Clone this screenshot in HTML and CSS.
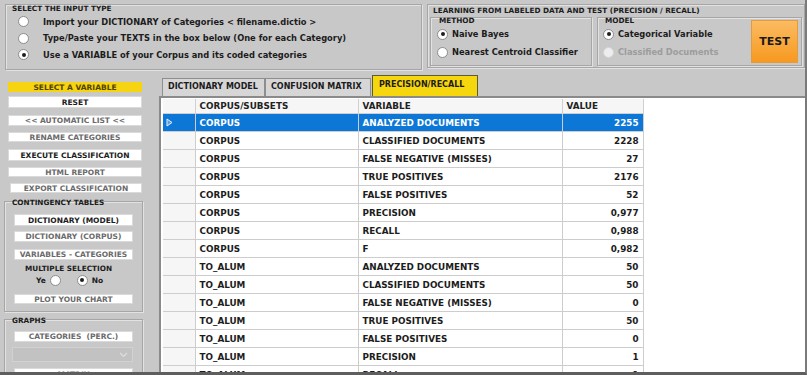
FILE: index.html
```html
<!DOCTYPE html>
<html lang="en">
<head>
<meta charset="UTF-8">
<meta name="viewport" content="width=device-width, initial-scale=1.0">
<title>Classification - Precision / Recall</title>
<link rel="stylesheet" href="styles.css">
</head>
<body>
<div class="app">

  <div class="top">
    <div class="group input-type">
      <div class="group-title">SELECT THE INPUT TYPE</div>
      <div class="radio"><span class="dot"></span>Import your DICTIONARY of Categories &lt; filename.dictio &gt;</div>
      <div class="radio"><span class="dot"></span>Type/Paste your TEXTS in the box below (One for each Category)</div>
      <div class="radio"><span class="dot on"></span>Use a VARIABLE of your Corpus and its coded categories</div>
    </div>

    <div class="group learning">
      <div class="group-title">LEARNING FROM LABELED DATA AND TEST (PRECISION / RECALL)</div>
      <div class="learning-row">
        <div class="group sub method">
          <div class="sub-title">METHOD</div>
          <div class="radio small"><span class="dot on"></span>Naive Bayes</div>
          <div class="radio small"><span class="dot"></span>Nearest Centroid Classifier</div>
        </div>
        <div class="group sub model">
          <div class="model-left">
            <div class="sub-title">MODEL</div>
            <div class="radio small"><span class="dot on"></span>Categorical Variable</div>
            <div class="radio small off"><span class="dot"></span>Classified Documents</div>
          </div>
          <button class="test">TEST</button>
        </div>
      </div>
    </div>
  </div>

  <div class="main">
    <div class="side">
      <div class="btn yellow h10">SELECT A VARIABLE</div>
      <div class="btn h12 mt4">RESET</div>
      <div class="btn grey h11 mt7">&lt;&lt; AUTOMATIC LIST &lt;&lt;</div>
      <div class="btn grey h10 mt6">RENAME CATEGORIES</div>
      <div class="btn h12 mt7">EXECUTE CLASSIFICATION</div>
      <div class="btn grey h10 mt6">HTML REPORT</div>
      <div class="btn grey h10 mt6 export">EXPORT CLASSIFICATION</div>

      <div class="group side-box contingency">
        <div class="sub-title">CONTINGENCY TABLES</div>
        <div class="btn inner h12 mt7">DICTIONARY (MODEL)</div>
        <div class="btn inner grey h11 mt5">DICTIONARY (CORPUS)</div>
        <div class="btn inner grey h11 mt7">VARIABLES - CATEGORIES</div>
        <div class="multi">MULTIPLE SELECTION</div>
        <div class="yes-no">
          <span>Ye</span><span class="dot"></span>
          <span class="dot on"></span><span>No</span>
        </div>
        <div class="btn inner grey h10 mt8">PLOT YOUR CHART</div>
      </div>

      <div class="group side-box graphs">
        <div class="sub-title">GRAPHS</div>
        <div class="btn inner grey h11 mt6">CATEGORIES&nbsp; (PERC.)</div>
        <div class="select">
          <svg width="9" height="6" viewBox="0 0 9 6"><polyline points="1,1 4.5,4.5 8,1" fill="none" stroke="#dedede" stroke-width="1.2"/></svg>
        </div>
        <div class="btn inner grey h12 mt6">MATRIX</div>
      </div>
    </div>

    <div class="tabs-wrap">
      <div class="tabs">
        <div class="tab">DICTIONARY MODEL</div>
        <div class="tab">CONFUSION MATRIX</div>
        <div class="tab active">PRECISION/RECALL</div>
      </div>
      <div class="panel">
        <table class="grid">
          <colgroup>
            <col class="c-head"><col class="c-corpus"><col class="c-var"><col class="c-val">
          </colgroup>
          <thead>
            <tr><th></th><th>CORPUS/SUBSETS</th><th>VARIABLE</th><th>VALUE</th></tr>
          </thead>
          <tbody>
            <tr class="sel">
              <td class="rh"><svg width="7" height="9" viewBox="0 0 7 9"><polygon points="1,1 6,4.5 1,8" fill="#5b9be0" stroke="#e8f1fb" stroke-width="1"/></svg></td>
              <td>CORPUS</td><td>ANALYZED DOCUMENTS</td><td class="num">2255</td>
            </tr>
            <tr><td class="rh"></td><td>CORPUS</td><td>CLASSIFIED DOCUMENTS</td><td class="num">2228</td></tr>
            <tr><td class="rh"></td><td>CORPUS</td><td>FALSE NEGATIVE (MISSES)</td><td class="num">27</td></tr>
            <tr><td class="rh"></td><td>CORPUS</td><td>TRUE POSITIVES</td><td class="num">2176</td></tr>
            <tr><td class="rh"></td><td>CORPUS</td><td>FALSE POSITIVES</td><td class="num">52</td></tr>
            <tr><td class="rh"></td><td>CORPUS</td><td>PRECISION</td><td class="num">0,977</td></tr>
            <tr><td class="rh"></td><td>CORPUS</td><td>RECALL</td><td class="num">0,988</td></tr>
            <tr><td class="rh"></td><td>CORPUS</td><td>F</td><td class="num">0,982</td></tr>
            <tr><td class="rh"></td><td>TO_ALUM</td><td>ANALYZED DOCUMENTS</td><td class="num">50</td></tr>
            <tr><td class="rh"></td><td>TO_ALUM</td><td>CLASSIFIED DOCUMENTS</td><td class="num">50</td></tr>
            <tr><td class="rh"></td><td>TO_ALUM</td><td>FALSE NEGATIVE (MISSES)</td><td class="num">0</td></tr>
            <tr><td class="rh"></td><td>TO_ALUM</td><td>TRUE POSITIVES</td><td class="num">50</td></tr>
            <tr><td class="rh"></td><td>TO_ALUM</td><td>FALSE POSITIVES</td><td class="num">0</td></tr>
            <tr><td class="rh"></td><td>TO_ALUM</td><td>PRECISION</td><td class="num">1</td></tr>
            <tr><td class="rh"></td><td>TO_ALUM</td><td>RECALL</td><td class="num">1</td></tr>
          </tbody>
        </table>
      </div>
    </div>
  </div>

</div>
</body>
</html>
```

FILE: styles.css
```css
body {
  margin: 0;
  background: #c8c8c8;
}

.app {
  width: 807px;
  height: 375px;
  box-sizing: border-box;
  border-right: 2px solid #7a7a7a;
  border-bottom: 3px solid #5e5e5e;
  display: flex;
  flex-direction: column;
  overflow: hidden;
  background: #c8c8c8;
  font-family: "DejaVu Sans", Verdana, sans-serif;
  font-weight: bold;
  color: #1c1c1c;
}

/* group boxes */
.group {
  border: 1px solid #a6a6a6;
  box-shadow: inset 1px 1px 0 #e2e2e2, 1px 1px 0 #e2e2e2;
  box-sizing: border-box;
}
.group-title {
  font-size: 7.3px;
  line-height: 8px;
  padding-left: 6px;
}
.sub-title {
  font-size: 7.3px;
  line-height: 8px;
  padding-left: 2px;
  margin-top: -1px;
}

.top {
  display: flex;
  gap: 5px;
  padding: 4px 0 0 5px;
  height: 71px;
  box-sizing: border-box;
  flex: none;
}
.input-type {
  width: 417px;
  height: 66px;
}
.learning {
  width: 378px;
  height: 64px;
  padding: 2px 2px 0 2px;
}
.learning .group-title {
  padding-left: 3px;
}
.learning-row {
  display: flex;
  gap: 5px;
  margin-top: 2px;
}
.method {
  width: 162px;
  height: 49px;
  padding-left: 6px;
}
.model {
  flex: 1;
  height: 49px;
  padding-left: 5px;
  display: flex;
  justify-content: space-between;
}

/* radios */
.radio {
  display: flex;
  align-items: center;
  height: 16.5px;
  font-size: 8.3px;
  padding-left: 12px;
  gap: 14px;
}
.input-type .radio:nth-child(2) {
  margin-top: 0.5px;
}
.radio.small {
  height: 18px;
  padding-left: 0;
  gap: 4px;
}
.method .radio.small:first-of-type,
.model .radio.small:first-of-type {
  margin-top: 1px;
}
.radio.off {
  color: #9c9c9c;
}
.dot {
  width: 11px;
  height: 11px;
  border-radius: 50%;
  background: #fff;
  border: 1px solid #8c8c8c;
  box-sizing: border-box;
  flex: none;
  position: relative;
  display: inline-block;
}
.dot.on::after {
  content: "";
  position: absolute;
  inset: 2.5px;
  border-radius: 50%;
  background: #1e1e1e;
}
.off .dot {
  background: #ededed;
  border-color: #d4d4d4;
}

.test {
  width: 47px;
  height: 43px;
  margin: 2px 3px 0 0;
  border: 1px solid #e59a3c;
  background: linear-gradient(#fbbb62, #f7991f);
  font-family: inherit;
  font-weight: bold;
  font-size: 11px;
  color: #1a1a1a;
  padding: 0;
}

/* left column */
.main {
  display: flex;
  flex: 1;
  min-height: 0;
}
.side {
  width: 160px;
  flex: none;
  padding-top: 11px;
}
.btn {
  margin-left: 8px;
  width: 134px;
  background: #fff;
  border: 1px solid #dadada;
  box-sizing: border-box;
  font-size: 7.5px;
  text-align: center;
  color: #1c1c1c;
  display: flex;
  align-items: center;
  justify-content: center;
}
.btn.grey { color: #6a6a6a; }
.btn.yellow {
  background: #f6d411;
  border-color: #f6d411;
  color: #4e4300;
}
.btn.export { margin-left: 10px; width: 132px; }
.btn.inner { margin-left: 9px; width: 119px; }
.h10 { height: 10px; }
.h11 { height: 11px; }
.h12 { height: 12px; }
.mt4 { margin-top: 4px; }
.mt5 { margin-top: 5px; }
.mt6 { margin-top: 6px; }
.mt7 { margin-top: 7px; }
.mt8 { margin-top: 8px; }

.side-box {
  margin-left: 4px;
  width: 139px;
  padding-left: 5px;
}
.side-box .sub-title {
  margin-top: -3px;
}
.side-box .btn.inner { margin-left: 4px; }
.contingency {
  margin-top: 8px;
  height: 111px;
}
.contingency .btn.inner:first-of-type { margin-top: 9px; }
.graphs {
  margin-top: 7px;
  height: 70px;
}
.graphs .btn.inner:first-of-type { margin-top: 8px; }
.multi {
  font-size: 7.3px;
  line-height: 8px;
  margin-top: 5px;
  padding-left: 15px;
}
.yes-no {
  display: flex;
  align-items: center;
  height: 12px;
  margin-top: 1px;
  font-size: 7.5px;
  padding-left: 26px;
  gap: 4px;
}
.yes-no .dot.on { margin-left: 12px; }
.select {
  margin: 5px 0 0 2px;
  width: 121px;
  height: 15px;
  background: #c2c2c2;
  border: 1px solid #d2d2d2;
  box-sizing: border-box;
  display: flex;
  align-items: center;
  justify-content: flex-end;
  padding-right: 4px;
}

/* tabs and grid */
.tabs-wrap {
  flex: 1;
  display: flex;
  flex-direction: column;
  padding-top: 4px;
  min-width: 0;
}
.tabs {
  display: flex;
  align-items: flex-end;
  height: 21px;
  padding-left: 2px;
  flex: none;
}
.tab {
  height: 18px;
  box-sizing: border-box;
  border: 1px solid #8e8e8e;
  border-bottom: none;
  background: #d6d6d6;
  font-size: 8px;
  line-height: 16px;
  padding: 0 5px;
  width: 103px;
}
.tab + .tab { width: 106px; }
.tab.active {
  height: 21px;
  line-height: 18px;
  background: #f6d60c;
  border: 1px solid #5b5b3a;
  border-bottom: none;
  margin-left: 1px;
  padding-left: 6px;
}
.panel {
  flex: 1;
  border-top: 2px solid #8a8a8a;
  border-left: 2px solid #8a8a8a;
  margin-left: -1px;
  background: #fff;
  padding: 1px 0 0 2px;
  overflow: hidden;
}
.grid {
  border-collapse: collapse;
  table-layout: fixed;
  width: 480px;
  font-size: 8.8px;
}
.c-head { width: 32px; }
.c-corpus { width: 163px; }
.c-var { width: 204px; }
.c-val { width: 81px; }
.grid th {
  height: 14px;
  padding: 0 4px;
  text-align: left;
  background: #f6f6f6;
  border: 1px solid #d0d0d0;
  border-top: none;
  color: #222;
}
.grid td {
  height: 17px;
  padding: 0 4px;
  border: 1px solid #cdcdcd;
  white-space: nowrap;
  overflow: hidden;
}
.grid td.rh {
  background: #f6f6f6;
  padding: 0 0 0 3px;
}
.grid th:first-child { border-left: none; }
.grid td.rh { border-left: none; }
.grid td.num { text-align: right; }
.grid tr.sel td {
  background: #0c77d6;
  color: #fff;
}
.grid tr.sel td.rh svg { display: block; }
```
